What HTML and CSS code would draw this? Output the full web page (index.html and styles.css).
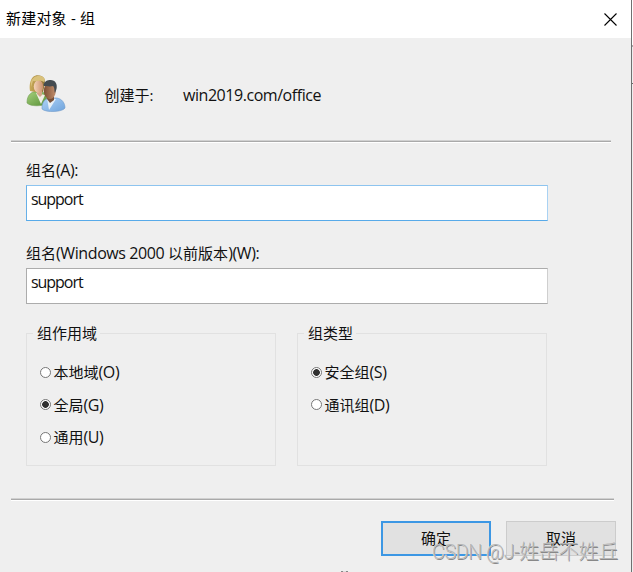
FILE: index.html
```html
<!DOCTYPE html>
<html lang="zh-CN">
<head>
<meta charset="utf-8">
<title>新建对象 - 组</title>
<link rel="stylesheet" href="styles.css">
</head>
<body>
<div class="window">
  <header class="titlebar">
    <h1 class="title">新建对象 - 组</h1>
    <svg class="close" width="13" height="13" viewBox="0 0 13 13"><path d="M.5.5l12 12M12.500.500l-12 12"/></svg>
  </header>
  <section class="intro">
    <svg class="users" width="42" height="40" viewBox="0 0 42 40">
      <defs>
        <linearGradient id="green" x2="1" y2="1"><stop stop-color="#a5d07c"/><stop offset="1" stop-color="#568f35"/></linearGradient>
        <linearGradient id="blue" x2="1" y2="1"><stop stop-color="#b0d3f7"/><stop offset="1" stop-color="#6ea3dc"/></linearGradient>
        <linearGradient id="fair" x2="1"><stop stop-color="#f4d3b8"/><stop offset="1" stop-color="#c98f6a"/></linearGradient>
        <linearGradient id="tan" x2="1"><stop stop-color="#7d4f34"/><stop offset="1" stop-color="#c38f6c"/></linearGradient>
        <linearGradient id="blond" x2="1"><stop stop-color="#c9aa58"/><stop offset="1" stop-color="#8f7436"/></linearGradient>
      </defs>
      <path fill="url(#green)" stroke="#719c53" stroke-width=".6" d="M2 29c0-6 2-9 6-11h9c4 1 5 4 5 8v4c-5 2-16 3-20-1z"/>
      <path fill="#f0eee5" d="M11 19l5 11 4-9z"/>
      <path fill="url(#blond)" d="M5 17C4 12 5 6 8 3c3-3 9-2 11 1 2 4 0 10-1 14l-8 0z"/>
      <path fill="#d2a586" d="M12 17h5v4l-2 2-3-3z"/>
      <ellipse cx="13.500" cy="12.500" rx="4.700" ry="6.500" fill="url(#fair)"/>
      <path fill="#d9c17b" d="M6 8C8 0 19 0 20 6l-1 2c-4-3-8 0-11-1l-2 6z"/>
      <path fill="url(#blue)" stroke="#719bc9" stroke-width=".6" d="M17 34c0-6 3-9 7-10h8c5 1 8 5 8 10-2 4-19 5-23 1z"/>
      <path fill="#e8f0f7" d="M22 24l2 12 7-11z"/>
      <path fill="#765039" d="M22 21h7l0 5-4 3-3-4z"/>
      <ellipse cx="24.800" cy="17" rx="6" ry="8" fill="url(#tan)"/>
      <path fill="#444b50" d="M18.500 11c1-4 4-5 7-5 5 0 7 4 6 9l-1.500 4c-1-2 0-5-2-7-3 1-7 0-9 0z"/>
    </svg>
    <span class="label">创建于:</span>
    <span class="latin">win2019.com/office</span>
  </section>
  <hr class="rule">
  <form class="form">
    <label class="caption" for="name">组名<span class="latin">(A):</span></label>
    <div class="input focused" id="name"><span class="latin">support</span></div>
    <label class="caption second" for="legacy">组名<span class="latin">(Windows 2000 </span>以前版本<span class="latin">)(W):</span></label>
    <div class="input" id="legacy"><span class="latin">support</span></div>
    <div class="groups">
      <section class="group">
        <h2 class="legend">组作用域</h2>
        <div class="option"><i class="radio"></i>本地域<span class="latin">(O)</span></div>
        <div class="option"><i class="radio checked"></i>全局<span class="latin">(G)</span></div>
        <div class="option"><i class="radio"></i>通用<span class="latin">(U)</span></div>
      </section>
      <section class="group">
        <h2 class="legend">组类型</h2>
        <div class="option"><i class="radio checked"></i>安全组<span class="latin">(S)</span></div>
        <div class="option"><i class="radio"></i>通讯组<span class="latin">(D)</span></div>
      </section>
    </div>
  </form>
  <hr class="rule lower">
  <footer class="actions">
    <div class="button primary">确定</div>
    <div class="button">取消</div>
  </footer>
  <div class="watermark"><span class="site">CSDN @J-</span>姓岳不姓丘</div>
  <i class="speck"></i>
</div>
<div class="edge"></div>
</body>
</html>
```
FILE: styles.css
```css
* { box-sizing: border-box; }
body {
  margin: 0;
  display: flex;
  width: 633px;
  height: 572px;
  overflow: hidden;
  background: #f1f1f1;
  color: #111;
  font: 15px/20px "Open Sans", "Noto Sans CJK SC", sans-serif;
}
.window { position: relative; width: 631px; height: 572px; background: #efefef; }
.edge { width: 2px; border-left: 1px solid #707070; background: linear-gradient(#fff 45px, #aaa 45px 47px, #eee 47px 83px, #666 83px 84px, #eee 84px); }
.titlebar { display: flex; align-items: center; justify-content: space-between; height: 38px; padding: 0 14px 0 6px; background: #fff; }
.title { margin: -2px 0 0; font-size: 15px; font-weight: 400; color: #000; letter-spacing: .2px; }
.close { fill: none; stroke: #000; stroke-width: 1.1; }
.latin { font-size: 16px; line-height: 20px; letter-spacing: -.4px; }
.intro { display: flex; height: 102px; padding: 36px 0 0 25px; }
.users { flex: none; margin-right: 37.5px; }
.label { width: 78.5px; margin-top: 11px; }
.intro .latin { margin-top: 11px; letter-spacing: -.45px; }
.rule { width: 600px; height: 3px; margin: 0 0 0 11px; border: 0; background: linear-gradient(#d0d0d0 1px, #a9a9a9 1px 2px, #fff 2px); }
.form { width: 522px; margin-left: 26px; padding-top: 17px; }
.caption { display: block; height: 25px; }
.second { margin-top: 22px; }
.input { height: 36px; padding: 3px 4px; border: 1px solid #acacac; border-right-color: #cfcfcf; background: #fff; }
.input .latin { letter-spacing: -1.05px; }
.focused { border-color: #8dc4ef #a9d2f3 #58aae9 #67b0e8; }
.groups { display: flex; gap: 21px; margin-top: 29px; }
.group { width: 250px; height: 133px; border: 1px solid #e1e1e1; padding-left: 12px; }
.legend { width: fit-content; height: 20px; margin: -11px 0 19px -6px; padding: 0 3px 0 4px; background: #efefef; font-size: 15px; font-weight: 400; }
.option { display: flex; align-items: center; height: 20px; margin-bottom: 12.5px; }
.radio { width: 11px; height: 11px; margin: 0 3px 0 .5px; border: 1px solid #777; border-radius: 50%; background: #fff; }
.checked { background: radial-gradient(circle, #303030 0 3px, #fff 3.7px); }
.lower { width: 603px; margin-top: 32px; }
.actions { display: flex; gap: 15px; margin: 20px 0 0 381px; }
.button { width: 110px; height: 35px; padding-top: 6px; border: 1px solid #ccc; background: #e1e1e1; text-align: center; }
.primary { border: 2px solid #3c97e4; padding-top: 5px; }
.watermark { position: absolute; left: 432px; top: 539px; color: #b5b5b5; font: 300 20px/24px "Noto Sans CJK SC", sans-serif; letter-spacing: -.2px; white-space: nowrap; text-shadow: -.5px -.5px 0 #eee, .5px .5px .5px #888; }
.site { font-family: Roboto, "Liberation Sans", sans-serif; letter-spacing: -.6px; }
.speck { position: absolute; left: 341px; top: 571px; width: 7px; height: 1px; background: linear-gradient(90deg, #888 2px, #ddd 2px 5px, #888 5px); }
```
